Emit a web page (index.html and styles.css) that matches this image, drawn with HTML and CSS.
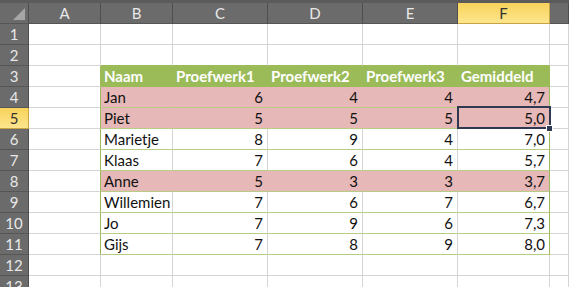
FILE: index.html
```html
<!DOCTYPE html>
<html>
<head>
    <link rel="stylesheet" href="styles.css">
</head>
<body>

<div class="topbar"></div>

<div class="sheet">
    <!-- column headers -->
    <div class="row head">
        <div class="rh corner"><span class="tri"></span></div>
        <div class="ch">A</div>
        <div class="ch">B</div>
        <div class="ch">C</div>
        <div class="ch">D</div>
        <div class="ch">E</div>
        <div class="ch sel">F</div>
        <div class="ch rest"></div>
    </div>

    <div class="row">
        <div class="rh">1</div>
        <div class="c"></div><div class="c"></div><div class="c"></div><div class="c"></div><div class="c"></div><div class="c"></div><div class="c rest"></div>
    </div>
    <div class="row">
        <div class="rh">2</div>
        <div class="c"></div><div class="c gb"></div><div class="c gb"></div><div class="c gb"></div><div class="c gb"></div><div class="c gb"></div><div class="c rest"></div>
    </div>

    <!-- table header -->
    <div class="row">
        <div class="rh">3</div>
        <div class="c edge"></div>
        <div class="c th">Naam</div>
        <div class="c th">Proefwerk1</div>
        <div class="c th">Proefwerk2</div>
        <div class="c th">Proefwerk3</div>
        <div class="c th last">Gemiddeld</div>
        <div class="c rest"></div>
    </div>

    <div class="row pink">
        <div class="rh">4</div>
        <div class="c edge"></div>
        <div class="c td">Jan</div>
        <div class="c td num">6</div>
        <div class="c td num">4</div>
        <div class="c td num">4</div>
        <div class="c td num last">4,7</div>
        <div class="c rest"></div>
    </div>
    <div class="row pink">
        <div class="rh sel">5</div>
        <div class="c edge"></div>
        <div class="c td">Piet</div>
        <div class="c td num">5</div>
        <div class="c td num">5</div>
        <div class="c td num">5</div>
        <div class="c td num last active">5,0<span class="handle"></span></div>
        <div class="c rest"></div>
    </div>
    <div class="row">
        <div class="rh">6</div>
        <div class="c edge"></div>
        <div class="c td">Marietje</div>
        <div class="c td num">8</div>
        <div class="c td num">9</div>
        <div class="c td num">4</div>
        <div class="c td num last">7,0</div>
        <div class="c rest"></div>
    </div>
    <div class="row">
        <div class="rh">7</div>
        <div class="c edge"></div>
        <div class="c td">Klaas</div>
        <div class="c td num">7</div>
        <div class="c td num">6</div>
        <div class="c td num">4</div>
        <div class="c td num last">5,7</div>
        <div class="c rest"></div>
    </div>
    <div class="row pink">
        <div class="rh">8</div>
        <div class="c edge"></div>
        <div class="c td">Anne</div>
        <div class="c td num">5</div>
        <div class="c td num">3</div>
        <div class="c td num">3</div>
        <div class="c td num last">3,7</div>
        <div class="c rest"></div>
    </div>
    <div class="row">
        <div class="rh">9</div>
        <div class="c edge"></div>
        <div class="c td">Willemien</div>
        <div class="c td num">7</div>
        <div class="c td num">6</div>
        <div class="c td num">7</div>
        <div class="c td num last">6,7</div>
        <div class="c rest"></div>
    </div>
    <div class="row">
        <div class="rh">10</div>
        <div class="c edge"></div>
        <div class="c td">Jo</div>
        <div class="c td num">7</div>
        <div class="c td num">9</div>
        <div class="c td num">6</div>
        <div class="c td num last">7,3</div>
        <div class="c rest"></div>
    </div>
    <div class="row">
        <div class="rh">11</div>
        <div class="c edge"></div>
        <div class="c td">Gijs</div>
        <div class="c td num">7</div>
        <div class="c td num">8</div>
        <div class="c td num">9</div>
        <div class="c td num last">8,0</div>
        <div class="c rest"></div>
    </div>

    <div class="row">
        <div class="rh">12</div>
        <div class="c"></div><div class="c"></div><div class="c"></div><div class="c"></div><div class="c"></div><div class="c"></div><div class="c rest"></div>
    </div>
    <div class="row">
        <div class="rh">13</div>
        <div class="c"></div><div class="c"></div><div class="c"></div><div class="c"></div><div class="c"></div><div class="c"></div><div class="c rest"></div>
    </div>
</div>

</body>
</html>
```

FILE: styles.css
```css
/* General */
body {
    margin: 0;
    padding: 0;
    background: #fff;
    font-family: Lato, "Open Sans", sans-serif;
    font-size: 15px;
    color: #111;
    overflow: hidden;
}

.topbar {
    height: 3px;
    background: #5b5b5b;
}

.sheet {
    width: 569px;
}

/* one spreadsheet row */
.row {
    display: grid;
    grid-template-columns: 29px 72px 72px 95px 95px 95px 92px 1fr;
    height: 21px;
}

.row.head {
    height: 21px;
}

.row > div {
    box-sizing: border-box;
    border-right: 1px solid #d4d4d4;
    border-bottom: 1px solid #d4d4d4;
    white-space: nowrap;
    overflow: visible;
}

/* headers */
.ch, .rh {
    background: #6b6b6b;
    color: #e8e8e8;
    text-align: center;
    line-height: 20px;
    font-size: 15px;
    border-right-color: #4f4f4f !important;
    border-bottom-color: #555 !important;
}

.rh {
    font-size: 15px;
}

.ch.sel, .rh.sel {
    background: linear-gradient(#f8d35a, #fde58e);
    color: #333;
    border-bottom-color: #c9a443 !important;
    border-right-color: #c9a443 !important;
}

.corner {
    position: relative;
}

.corner .tri {
    position: absolute;
    right: 3px;
    bottom: 3px;
    width: 0;
    height: 0;
    border-left: 12px solid transparent;
    border-bottom: 12px solid #a6a6a6;
}

/* cells */
.c {
    line-height: 20px;
    padding: 0 3px;
}

.c.gb {
    border-bottom-color: #9bbb59 !important;
}

.c.edge {
    border-right-color: #9bbb59 !important;
}

.th {
    background: #9bbb59;
    color: #fff;
    font-weight: bold;
    border-right-color: #9bbb59 !important;
    border-bottom-color: #9bbb59 !important;
}

.td {
    border-bottom-color: #b7cc84 !important;
}

.num {
    text-align: right;
    padding-right: 4px;
}

.pink .td {
    background: #e6b8b7;
    border-right-color: #e6b8b7 !important;
}

.c.last {
    border-right-color: #9bbb59 !important;
}

/* selected cell F5 */
.active {
    position: relative;
}

.active::after {
    content: "";
    position: absolute;
    left: -1px;
    top: -2px;
    right: -2px;
    bottom: -1px;
    border: 2px solid #2f3a52;
}

.handle {
    position: absolute;
    right: -4px;
    bottom: -4px;
    width: 5px;
    height: 5px;
    background: #2f3a52;
    border: 1px solid #fff;
    z-index: 2;
}
```
